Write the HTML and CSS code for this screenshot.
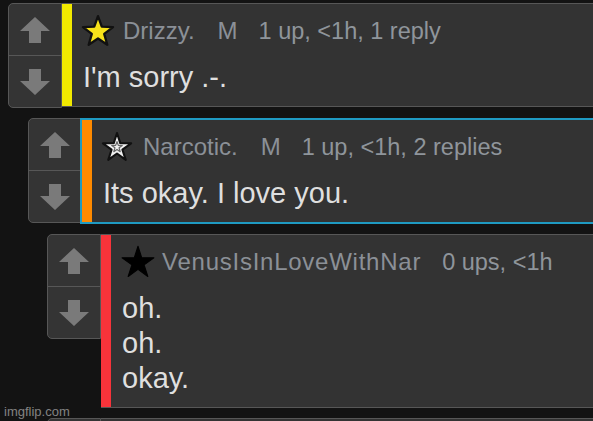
FILE: index.html
```html
<!DOCTYPE html>
<html>
<head>
<meta charset="utf-8">
<link rel="stylesheet" href="styles.css">
</head>
<body>
<div class="thread">
  <div class="comment">
    <div class="vote">
      <div class="vbtn up"><svg viewBox="0 0 32 28" width="32" height="28"><polygon points="16,1 31,15 22,15 22,27 10,27 10,15 1,15"/></svg></div>
      <div class="vbtn down"><svg viewBox="0 0 32 28" width="32" height="28"><polygon points="10,1 22,1 22,13 31,13 16,27 1,13 10,13"/></svg></div>
    </div>
    <div class="body">
      <div class="bar bar-yellow"></div>
      <div class="inner">
        <div class="head">
          <svg class="star" viewBox="-1 -1 26 26"><polygon class="star-yellow" points="12,0.6 14.9,8.65 23.5,9 16.75,14.25 19.1,22.5 12,17.7 4.9,22.5 7.25,14.25 0.5,9 9.1,8.65"/></svg>
          <span class="name">Drizzy.</span>
          <span class="mod">M</span>
          <span class="meta">1 up, &lt;1h, 1 reply</span>
        </div>
        <div class="text">I'm sorry .-.</div>
      </div>
    </div>
  </div>

  <div class="comment level2">
    <div class="vote">
      <div class="vbtn up"><svg viewBox="0 0 32 28" width="32" height="28"><polygon points="16,1 31,15 22,15 22,27 10,27 10,15 1,15"/></svg></div>
      <div class="vbtn down"><svg viewBox="0 0 32 28" width="32" height="28"><polygon points="10,1 22,1 22,13 31,13 16,27 1,13 10,13"/></svg></div>
    </div>
    <div class="body highlight">
      <div class="bar bar-orange"></div>
      <div class="inner">
        <div class="head">
          <svg class="star star-mid" viewBox="-1 -1 26 26"><polygon class="star-white" points="12,0.6 14.7,9 23.5,9 16.4,14.1 19.1,22.5 12,17.3 4.9,22.5 7.6,14.1 0.5,9 9.3,9"/><polygon class="star-inner" points="12,7.6 13.1,10.7 16.3,10.8 13.7,12.7 14.6,15.8 12,14 9.4,15.8 10.3,12.7 7.7,10.8 10.9,10.7"/></svg>
          <span class="name">Narcotic.</span>
          <span class="mod">M</span>
          <span class="meta">1 up, &lt;1h, 2 replies</span>
        </div>
        <div class="text">Its okay. I love you.</div>
      </div>
    </div>
  </div>

  <div class="comment level3">
    <div class="vote">
      <div class="vbtn up"><svg viewBox="0 0 32 28" width="32" height="28"><polygon points="16,1 31,15 22,15 22,27 10,27 10,15 1,15"/></svg></div>
      <div class="vbtn down"><svg viewBox="0 0 32 28" width="32" height="28"><polygon points="10,1 22,1 22,13 31,13 16,27 1,13 10,13"/></svg></div>
    </div>
    <div class="body">
      <div class="bar bar-red"></div>
      <div class="inner">
        <div class="head">
          <svg class="star star-big" viewBox="-1 -1 26 26"><polygon class="star-black" points="12,0.6 14.7,9 23.5,9 16.4,14.1 19.1,22.5 12,17.3 4.9,22.5 7.6,14.1 0.5,9 9.3,9"/></svg>
          <span class="name name-long">VenusIsInLoveWithNar</span>
          <span class="meta">0 ups, &lt;1h</span>
        </div>
        <div class="text">oh.<br>oh.<br>okay.</div>
      </div>
    </div>
  </div>

  <div class="comment level3">
    <div class="vote">
      <div class="vbtn up"></div>
      <div class="vbtn down"></div>
    </div>
    <div class="body">
      <div class="bar bar-grey"></div>
      <div class="inner">
        <div class="head"><span class="name">&nbsp;</span></div>
      </div>
    </div>
  </div>
</div>
<div class="watermark">imgflip.com</div>
</body>
</html>
```

FILE: styles.css
```css
html, body {
  margin: 0;
  padding: 0;
  overflow: hidden;
  background: #131313;
  height: 421px;
}

body {
  font-family: "Liberation Sans", Arial, sans-serif;
  position: relative;
}

.thread {
  padding: 3px 0 0 8px;
  width: 640px;
  display: flex;
  flex-direction: column;
  gap: 10px;
}

.comment {
  display: flex;
  align-items: flex-start;
}

.level2 { margin-left: 20px; }
.level3 { margin-left: 39px; }

.vote {
  width: 52px;
  flex: none;
  border: 1px solid #575757;
  border-radius: 5px 0 0 5px;
  background: #343434;
  display: flex;
  flex-direction: column;
}

.vbtn {
  height: 51px;
  display: flex;
  align-items: center;
  justify-content: center;
}

.vbtn.up { border-bottom: 1px solid #575757; }

.vbtn svg polygon { fill: #7a7a7a; }

.body {
  flex: 1;
  display: flex;
  background: #333333;
  border: 1px solid #575757;
  border-left: none;
}

.body.highlight {
  border: 2px solid #1f9ac2;
  margin-left: -2px;
}

.bar {
  width: 10px;
  flex: none;
}
.bar-yellow { background: #f2ea00; }
.bar-orange { background: #ff8a00; }
.bar-red { background: #f8333a; }
.bar-grey { background: #333; }

.inner {
  flex: 1;
  padding: 9px 12px 11px 11px;
}

.head {
  display: flex;
  align-items: center;
  height: 36px;
  font-size: 24px;
  color: #8b9097;
  white-space: nowrap;
}

.star {
  flex: none;
  width: 34px;
  height: 34px;
  margin-left: -2px;
  margin-right: 8px;
}
.star-mid {
  width: 32px;
  height: 32px;
  margin-left: -2px;
  margin-right: 10px;
}
.star-big {
  width: 36px;
  height: 36px;
  margin-left: -2px;
  margin-right: 6px;
}

.star-yellow { fill: #f7e21a; stroke: #111; stroke-width: 1.8; stroke-linejoin: round; }
.star-white { fill: #f2f2f2; stroke: #111; stroke-width: 1.7; stroke-linejoin: round; }
.star-inner { fill: none; stroke: #666; stroke-width: 1; stroke-linejoin: round; }
.star-black { fill: #000; stroke: #000; stroke-width: 0.8; stroke-linejoin: round; }

.name-long { letter-spacing: 0.75px; }

.mod { margin-left: 23px; }

.meta {
  margin-left: 21px;
  font-size: 23.5px;
  color: #8f959b;
}

.text {
  margin-top: 11px;
  font-size: 29px;
  line-height: 35px;
  color: #dfdfdf;
}

.watermark {
  position: absolute;
  left: 4px;
  top: 404px;
  font-size: 13px;
  color: #a8a8a8;
  opacity: 0.75;
}
```
